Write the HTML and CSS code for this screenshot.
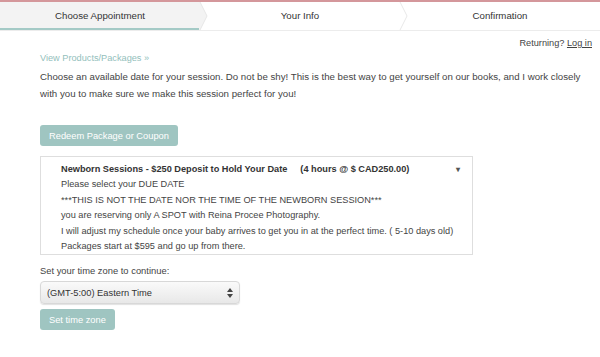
FILE: index.html
```html
<!DOCTYPE html>
<html lang="en">
<head>
  <meta charset="UTF-8">
  <title>Choose Appointment</title>
  <link rel="stylesheet" href="styles.css">
</head>
<body>
  <div class="topbar"></div>
  <nav class="steps">
    <div class="step active">Choose Appointment
      <svg class="chev" width="9" height="28" viewBox="0 0 9 28"><polygon points="0,0 1,0 8,14 1,28 0,28" fill="#f3f3f3"/><polyline points="1,0 8,14 1,28" fill="none" stroke="#e6e6e6" stroke-width="1"/></svg>
    </div>
    <div class="step">Your Info
      <svg class="chev" width="9" height="28" viewBox="0 0 9 28"><polyline points="1,0 8,14 1,28" fill="none" stroke="#e8e8e8" stroke-width="1"/></svg>
    </div>
    <div class="step">Confirmation</div>
  </nav>

  <div class="login">Returning? <a href="#">Log in</a></div>

  <main class="content">
    <a class="products" href="#">View Products/Packages &raquo;</a>
    <p class="intro">Choose an available date for your session. Do not be shy! This is the best way to get yourself on our books, and I work closely with you to make sure we make this session perfect for you!</p>

    <button class="btn redeem">Redeem Package or Coupon</button>

    <div class="service">
      <div class="service-head">
        <span class="service-name">Newborn Sessions - $250 Deposit to Hold Your Date</span>
        <span class="service-price">(4 hours @ $ CAD250.00)</span>
        <span class="caret">&#9662;</span>
      </div>
      <div class="service-desc">
        Please select your DUE DATE<br>
        ***THIS IS NOT THE DATE NOR THE TIME OF THE NEWBORN SESSION***<br>
        you are reserving only A SPOT with Reina Procee Photography.<br>
        I will adjust my schedule once your baby arrives to get you in at the perfect time. ( 5-10 days old)<br>
        Packages start at $595 and go up from there.
      </div>
    </div>

    <div class="tz">
      <label class="tz-label">Set your time zone to continue:</label>
      <div class="select-wrap">
        <select class="tz-select">
          <option>(GMT-5:00) Eastern Time</option>
        </select>
        <svg class="updown" width="6" height="10" viewBox="0 0 6 10"><polygon points="3,0 6,4 0,4" fill="#444"/><polygon points="0,6 6,6 3,10" fill="#444"/></svg>
      </div>
      <button class="btn">Set time zone</button>
    </div>
  </main>
</body>
</html>
```

FILE: styles.css
```css
body {
  margin: 0;
  font-family: "Liberation Sans", Arial, sans-serif;
  font-size: 9.7px;
  color: #444;
  background: #fff;
}
.topbar {
  height: 2px;
  background: #d4979b;
}
.steps {
  display: flex;
  height: 28px;
  border-bottom: 1px solid #ececec;
}
.step {
  position: relative;
  flex: 1;
  display: flex;
  align-items: center;
  justify-content: center;
  padding-bottom: 1px;
  font-size: 9.7px;
  color: #333;
}
.step.active {
  background: #f3f3f3;
  box-shadow: inset 0 -2px 0 #a4cac6;
}
.chev {
  position: absolute;
  top: 0;
  right: -8px;
  z-index: 1;
}
.login {
  text-align: right;
  padding: 7px 8px 0 0;
  font-size: 9.2px;
  color: #444;
}
.login a {
  color: #444;
}
.content {
  padding: 0 8px 0 40px;
}
.products {
  display: block;
  margin-top: 5px;
  font-size: 9.2px;
  color: #93c0bc;
  text-decoration: none;
}
.intro {
  margin: 5px 0 0;
  line-height: 17px;
}
.btn {
  display: block;
  font-family: inherit;
  font-size: 9.3px;
  color: #fff;
  background: #9fc5c1;
  border: none;
  border-radius: 3px;
  padding: 0 9px;
  height: 21px;
}
.redeem {
  margin-top: 23px;
}
.service {
  margin-top: 10px;
  width: 433px;
  box-sizing: border-box;
  border: 1px solid #dedede;
  padding: 5px 8px 0 20px;
  font-size: 9.2px;
  line-height: 15.4px;
}
.service-head {
  display: flex;
  gap: 13px;
  white-space: nowrap;
  font-weight: bold;
  color: #333;
}
.caret {
  margin-left: auto;
  margin-right: 4px;
  font-size: 7.5px;
  color: #555;
}
.tz {
  margin-top: 10px;
}
.tz-label {
  display: block;
  font-size: 9.4px;
}
.select-wrap {
  position: relative;
  width: 200px;
  margin-top: 5px;
}
.tz-select {
  display: block;
  width: 200px;
  height: 23px;
  padding: 0 6px;
  font-family: inherit;
  font-size: 9.3px;
  color: #333;
  -webkit-appearance: none;
  appearance: none;
  border: 1px solid #d8d8d8;
  border-radius: 4px;
  background: linear-gradient(#fafafa, #e8e8e8);
  box-shadow: 0 1px 1px rgba(0,0,0,0.12);
}
.updown {
  position: absolute;
  right: 7px;
  top: 7px;
}
.tz .btn {
  margin-top: 5px;
}
```
